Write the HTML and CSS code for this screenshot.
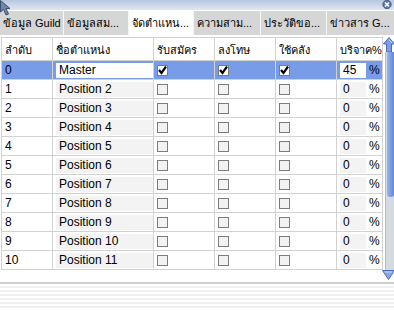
FILE: index.html
```html
<!DOCTYPE html>
<html>
<head>
  <title>Guild - จัดตำแหน่ง</title>
  <link rel="stylesheet" href="styles.css">
</head>
<body>
  <div class="window">
    <div class="title-bar">
      <!-- mouse pointer sitting over the window -->
      <svg class="pointer" width="12" height="16" viewBox="0 0 12 16">
        <path d="M0.5 0.5 L0.5 12 L3.5 9.5 L6 15 L8.5 14 L6 8.5 L10 8.5 Z" fill="#6f86a8" stroke="#3d5270" stroke-width="1"/>
      </svg>
      <svg class="close-btn" width="10" height="9" viewBox="0 0 10 9">
        <circle cx="5" cy="4.5" r="4.2" fill="#5f78a6" stroke="#3c5382" stroke-width="0.8"/>
        <path d="M3 2.5 L7 6.5 M7 2.5 L3 6.5" stroke="#fff" stroke-width="1.4"/>
      </svg>
    </div>

    <div class="tabs">
      <div class="tab">ข้อมูล Guild</div>
      <div class="tab">ข้อมูลสม...</div>
      <div class="tab active">จัดตำแหน...</div>
      <div class="tab">ความสาม...</div>
      <div class="tab">ประวัติขอ...</div>
      <div class="tab">ข่าวสาร G...</div>
    </div>

    <div class="grid-area">
      <table class="rank-table">
        <colgroup>
          <col class="col-no">
          <col class="col-name">
          <col class="col-flag">
          <col class="col-flag">
          <col class="col-flag">
          <col class="col-pct">
        </colgroup>
        <thead>
          <tr>
            <th>ลำดับ</th>
            <th>ชื่อตำแหน่ง</th>
            <th>รับสมัคร</th>
            <th>ลงโทษ</th>
            <th>ใช้คลัง</th>
            <th>บริจาค%</th>
          </tr>
        </thead>
        <tbody>
          <tr class="selected">
            <td>0</td>
            <td><span class="name-box">Master</span></td>
            <td><span class="check on"><svg width="9" height="9" viewBox="0 0 9 9"><path d="M1 4 L3.5 7 L8 0.5" fill="none" stroke="#000" stroke-width="2.2"/></svg></span></td>
            <td><span class="check on"><svg width="9" height="9" viewBox="0 0 9 9"><path d="M1 4 L3.5 7 L8 0.5" fill="none" stroke="#000" stroke-width="2.2"/></svg></span></td>
            <td><span class="check on"><svg width="9" height="9" viewBox="0 0 9 9"><path d="M1 4 L3.5 7 L8 0.5" fill="none" stroke="#000" stroke-width="2.2"/></svg></span></td>
            <td><span class="pct-box">45</span><span class="pct-sign">%</span></td>
          </tr>
          <tr>
            <td>1</td>
            <td><span class="name-box">Position 2</span></td>
            <td><span class="check"></span></td>
            <td><span class="check"></span></td>
            <td><span class="check"></span></td>
            <td><span class="pct-box">0</span><span class="pct-sign">%</span></td>
          </tr>
          <tr>
            <td>2</td>
            <td><span class="name-box">Position 3</span></td>
            <td><span class="check"></span></td>
            <td><span class="check"></span></td>
            <td><span class="check"></span></td>
            <td><span class="pct-box">0</span><span class="pct-sign">%</span></td>
          </tr>
          <tr>
            <td>3</td>
            <td><span class="name-box">Position 4</span></td>
            <td><span class="check"></span></td>
            <td><span class="check"></span></td>
            <td><span class="check"></span></td>
            <td><span class="pct-box">0</span><span class="pct-sign">%</span></td>
          </tr>
          <tr>
            <td>4</td>
            <td><span class="name-box">Position 5</span></td>
            <td><span class="check"></span></td>
            <td><span class="check"></span></td>
            <td><span class="check"></span></td>
            <td><span class="pct-box">0</span><span class="pct-sign">%</span></td>
          </tr>
          <tr>
            <td>5</td>
            <td><span class="name-box">Position 6</span></td>
            <td><span class="check"></span></td>
            <td><span class="check"></span></td>
            <td><span class="check"></span></td>
            <td><span class="pct-box">0</span><span class="pct-sign">%</span></td>
          </tr>
          <tr>
            <td>6</td>
            <td><span class="name-box">Position 7</span></td>
            <td><span class="check"></span></td>
            <td><span class="check"></span></td>
            <td><span class="check"></span></td>
            <td><span class="pct-box">0</span><span class="pct-sign">%</span></td>
          </tr>
          <tr>
            <td>7</td>
            <td><span class="name-box">Position 8</span></td>
            <td><span class="check"></span></td>
            <td><span class="check"></span></td>
            <td><span class="check"></span></td>
            <td><span class="pct-box">0</span><span class="pct-sign">%</span></td>
          </tr>
          <tr>
            <td>8</td>
            <td><span class="name-box">Position 9</span></td>
            <td><span class="check"></span></td>
            <td><span class="check"></span></td>
            <td><span class="check"></span></td>
            <td><span class="pct-box">0</span><span class="pct-sign">%</span></td>
          </tr>
          <tr>
            <td>9</td>
            <td><span class="name-box">Position 10</span></td>
            <td><span class="check"></span></td>
            <td><span class="check"></span></td>
            <td><span class="check"></span></td>
            <td><span class="pct-box">0</span><span class="pct-sign">%</span></td>
          </tr>
          <tr>
            <td>10</td>
            <td><span class="name-box">Position 11</span></td>
            <td><span class="check"></span></td>
            <td><span class="check"></span></td>
            <td><span class="check"></span></td>
            <td><span class="pct-box">0</span><span class="pct-sign">%</span></td>
          </tr>
        </tbody>
      </table>

      <div class="scrollbar">
        <svg class="scroll-up" width="12" height="15" viewBox="0 0 12 15">
          <path d="M6 0.5 L11.5 7 L8.5 7 L8.5 15 L3.5 15 L3.5 7 L0.5 7 Z" fill="#7d9ee6" stroke="#4a6ab8" stroke-width="1"/>
          <path d="M6 2.5 L9 6" stroke="#c9d8f6" stroke-width="1"/>
        </svg>
        <div class="scroll-track">
          <div class="scroll-thumb"></div>
        </div>
        <svg class="scroll-down" width="13" height="10" viewBox="0 0 13 10">
          <path d="M0.5 0.5 L12.5 0.5 L6.5 9.5 Z" fill="#8aa6e8" stroke="#4a6ab8" stroke-width="1"/>
          <path d="M2.5 2 L10.5 2" stroke="#c9d8f6" stroke-width="1"/>
        </svg>
      </div>
    </div>

    <div class="footer"></div>
  </div>
</body>
</html>
```

FILE: styles.css
```css
body {
  margin: 0;
  font-family: "Liberation Sans", Arial, "Noto Sans", sans-serif;
  font-size: 12px;
  color: #000;
  background-color: #ffffff;
}
.window {
  position: relative;
  width: 394px;
  height: 310px;
  overflow: hidden;
}

/* Title strip */
.title-bar {
  height: 10px;
  display: flex;
  justify-content: flex-end;
  background: linear-gradient(#b7c7e0, #dfe7f3);
}
.pointer {
  position: absolute;
  left: 0;
  top: 0;
  z-index: 2;
}
.close-btn {
  margin-right: 2px;
}

/* Tabs */
.tabs {
  display: grid;
  grid-template-columns: 63px 64px 64px 66px 65px 67px;
  column-gap: 1px;
  height: 24px;
  margin-top: 1px;
  background-color: #f6f6f6;
}
.tab {
  padding-left: 3px;
  font-size: 11px;
  line-height: 24px;
  white-space: nowrap;
  overflow: hidden;
  background-color: #d6d6d6;
}
.tab.active {
  background-color: #ffffff;
}

/* Table + scrollbar */
.grid-area {
  display: flex;
  margin-top: 2px;
}
.rank-table {
  table-layout: fixed;
  border-collapse: collapse;
  width: 381px;
  margin-left: 1px;
  align-self: flex-start;
}
.col-no { width: 51px; }
.col-name { width: 101px; }
.col-flag { width: 61px; }
.col-pct { width: 46px; }

.rank-table th,
.rank-table td {
  padding: 0 0 0 3px;
  border: 1px solid #d2d2d2;
  text-align: left;
  font-weight: normal;
  white-space: nowrap;
  overflow: hidden;
}
.rank-table th {
  height: 20px;
  padding-top: 2px;
  font-size: 11px;
}
.rank-table td {
  height: 18px;
  line-height: 15px;
}
.rank-table tr.selected td {
  background-color: #789ce8;
}

.name-box {
  display: block;
  width: 94px;
  height: 15px;
  padding-left: 3px;
  background-color: #f3f3f3;
}
.selected .name-box {
  background-color: #ffffff;
}

.check {
  display: block;
  width: 9px;
  height: 9px;
  border: 1px solid #7c7c7c;
  background-color: #f2f2f2;
}
.check svg {
  display: block;
}
.check.on {
  background-color: #ffffff;
}

.pct-box {
  display: inline-block;
  width: 23px;
  height: 15px;
  padding-left: 3px;
  vertical-align: top;
  background-color: #f3f3f3;
}
.selected .pct-box {
  background-color: #ffffff;
}
.pct-sign {
  margin-left: 3px;
}

.scrollbar {
  width: 12px;
  height: 243px;
  display: flex;
  flex-direction: column;
}
.scroll-up,
.scroll-down {
  display: block;
  flex: none;
}
.scroll-down {
  margin-left: -1px;
}
.scroll-track {
  flex: 1;
  margin-left: 2px;
  border-left: 1px solid #b5bec6;
  background-color: #d4dbe0;
}
.scroll-thumb {
  width: 7px;
  height: 145px;
  margin-left: 1px;
  border-radius: 0 0 3px 3px;
  background: linear-gradient(90deg, #9ab4ee, #6088d8);
}

/* Striped strip under the grid */
.footer {
  height: 26px;
  margin-top: 2px;
  border-top: 2px solid #cdcdcd;
  background: repeating-linear-gradient(#ffffff 0 2px, #f0f0f0 2px 4px);
}
```
